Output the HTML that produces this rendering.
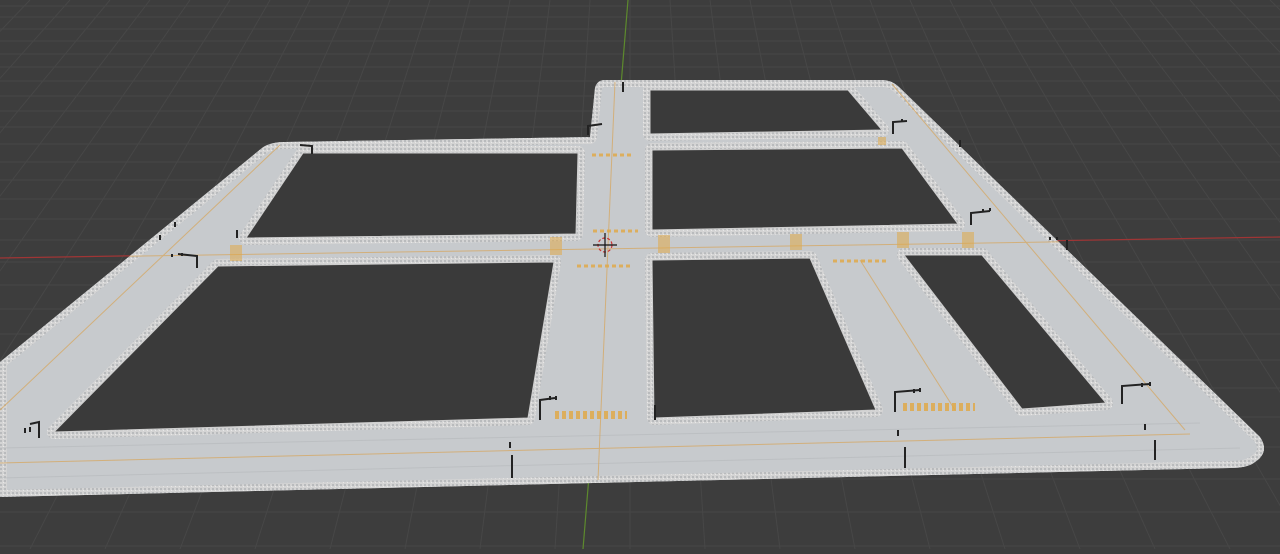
<!DOCTYPE html>
<html><head><style>html,body{margin:0;padding:0;background:#3d3d3d;overflow:hidden}</style></head>
<body>
<svg width="1280" height="549" viewBox="0 0 1280 549" xmlns="http://www.w3.org/2000/svg">
<defs>
<pattern id="gr" width="4" height="4" patternUnits="userSpaceOnUse">
<rect width="4" height="4" fill="#d4d4d4"/><rect x="0" y="0" width="2" height="2" fill="#b9bbbd"/><rect x="3" y="2" width="1" height="1" fill="#e8e8e8"/>
</pattern>
<path id="road" d="
M600,80 L882,80 Q892,80 900,88 L1260,437 Q1270,452 1255,462 Q1248,468 1230,468 L0,497 L0,362 L262,148 Q270,142 285,142 L590,137 L595,88 Q597,80 605,80 Z
M650,90 L848,90 L882,130 L650,134 Z
M652,150 L902,148 L958,224 L652,230 Z
M303,153 L578,153 L576,234 L246,238 Z
M218,266 L554,262 L528,418 L54,432 Z
M652,260 L810,258 L876,410 L654,418 Z
M904,255 L982,255 L1106,403 L1022,409 Z"/>
<clipPath id="rc"><use href="#road" clip-rule="evenodd"/></clipPath>
</defs>
<rect width="1280" height="549" fill="#3d3d3d"/>
<g stroke="#474747" stroke-width="1">
<line x1="0" y1="6" x2="1280" y2="6"/><line x1="0" y1="17" x2="1280" y2="17"/><line x1="0" y1="29" x2="1280" y2="29"/><line x1="0" y1="41" x2="1280" y2="41"/><line x1="0" y1="54" x2="1280" y2="54"/><line x1="0" y1="67" x2="1280" y2="67"/><line x1="0" y1="81" x2="1280" y2="81"/><line x1="0" y1="96" x2="1280" y2="96"/><line x1="0" y1="111" x2="1280" y2="111"/><line x1="0" y1="127" x2="1280" y2="127"/><line x1="0" y1="144" x2="1280" y2="144"/><line x1="0" y1="162" x2="1280" y2="162"/><line x1="0" y1="180" x2="1280" y2="180"/><line x1="0" y1="199" x2="1280" y2="199"/><line x1="0" y1="219" x2="1280" y2="219"/><line x1="0" y1="240" x2="1280" y2="240"/><line x1="0" y1="262" x2="1280" y2="262"/><line x1="0" y1="285" x2="1280" y2="285"/><line x1="0" y1="309" x2="1280" y2="309"/><line x1="0" y1="334" x2="1280" y2="334"/><line x1="0" y1="360" x2="1280" y2="360"/><line x1="0" y1="388" x2="1280" y2="388"/><line x1="0" y1="417" x2="1280" y2="417"/><line x1="0" y1="447" x2="1280" y2="447"/><line x1="0" y1="479" x2="1280" y2="479"/><line x1="0" y1="512" x2="1280" y2="512"/><line x1="0" y1="546" x2="1280" y2="546"/>
</g>
<g stroke="#474747" stroke-width="1">
<line x1="630" y1="0" x2="630" y2="549"/>
<line x1="670" y1="0" x2="705" y2="549"/><line x1="710" y1="0" x2="780" y2="549"/><line x1="750" y1="0" x2="855" y2="549"/><line x1="790" y1="0" x2="930" y2="549"/><line x1="830" y1="0" x2="1005" y2="549"/><line x1="870" y1="0" x2="1080" y2="549"/><line x1="910" y1="0" x2="1155" y2="549"/><line x1="950" y1="0" x2="1230" y2="549"/><line x1="990" y1="0" x2="1305" y2="549"/><line x1="1030" y1="0" x2="1380" y2="549"/><line x1="1070" y1="0" x2="1455" y2="549"/><line x1="1110" y1="0" x2="1530" y2="549"/><line x1="1150" y1="0" x2="1605" y2="549"/><line x1="1190" y1="0" x2="1680" y2="549"/><line x1="1230" y1="0" x2="1755" y2="549"/><line x1="1270" y1="0" x2="1830" y2="549"/>
<line x1="590" y1="0" x2="555" y2="549"/><line x1="550" y1="0" x2="480" y2="549"/><line x1="510" y1="0" x2="405" y2="549"/><line x1="470" y1="0" x2="330" y2="549"/><line x1="430" y1="0" x2="255" y2="549"/><line x1="390" y1="0" x2="180" y2="549"/><line x1="350" y1="0" x2="105" y2="549"/><line x1="310" y1="0" x2="30" y2="549"/><line x1="270" y1="0" x2="-45" y2="549"/><line x1="230" y1="0" x2="-120" y2="549"/><line x1="190" y1="0" x2="-195" y2="549"/><line x1="150" y1="0" x2="-270" y2="549"/><line x1="110" y1="0" x2="-345" y2="549"/><line x1="70" y1="0" x2="-420" y2="549"/><line x1="30" y1="0" x2="-495" y2="549"/>
</g>
<line x1="0" y1="258" x2="1280" y2="237" stroke="#a03535" stroke-width="1.2"/>
<line x1="628" y1="0" x2="583" y2="549" stroke="#5d8a2d" stroke-width="1.2"/>
<g clip-path="url(#rc)">
<rect width="1280" height="549" fill="#c7cacd"/>
<use href="#road" fill="none" stroke="url(#gr)" stroke-width="14" stroke-linejoin="round"/>
<g stroke="#b8bbbe" stroke-width="1" opacity="0.7">
<line x1="0" y1="478" x2="1240" y2="448"/><line x1="0" y1="448" x2="1200" y2="423"/>
</g>
<g stroke="#d7a458" stroke-width="1" fill="none" opacity="0.7">
<line x1="0" y1="463" x2="1190" y2="434"/>
<line x1="10" y1="258" x2="1180" y2="240"/>
<line x1="615" y1="82" x2="598" y2="480"/>
<line x1="280" y1="145" x2="0" y2="410"/>
<line x1="892" y1="84" x2="1185" y2="430"/>
<line x1="860" y1="260" x2="955" y2="410"/>
</g>
</g>
<g fill="#3a3a3a" stroke="#cfcfcf" stroke-width="1" stroke-linejoin="round">
<path d="M650,90 L848,90 L882,130 L650,134 Z"/>
<path d="M652,150 L902,148 L958,224 L652,230 Z"/>
<path d="M303,153 L578,153 L576,234 L246,238 Z"/>
<path d="M218,266 L554,262 L528,418 L54,432 Z"/>
<path d="M652,260 L810,258 L876,410 L654,418 Z"/>
<path d="M904,255 L982,255 L1106,403 L1022,409 Z"/>
</g>
<g stroke="#e0aa4a" stroke-width="8" stroke-dasharray="4 3" opacity="0.85">
<line x1="555" y1="415" x2="627" y2="415"/><line x1="903" y1="407" x2="975" y2="407"/>
</g>
<g stroke="#e0aa4a" stroke-width="3" stroke-dasharray="4 3" opacity="0.85">
<line x1="577" y1="266" x2="632" y2="266"/><line x1="593" y1="231" x2="638" y2="231"/><line x1="833" y1="261" x2="888" y2="261"/><line x1="592" y1="155" x2="632" y2="155"/>
</g>
<g fill="#e0aa4a" opacity="0.55">
<rect x="550" y="237" width="12" height="18"/><rect x="658" y="235" width="12" height="18"/><rect x="790" y="234" width="12" height="16"/><rect x="897" y="232" width="12" height="16"/><rect x="962" y="232" width="12" height="16"/><rect x="230" y="245" width="12" height="16"/><rect x="878" y="137" width="8" height="8"/>
</g>
<g stroke="#222" stroke-width="2" fill="none">
<path d="M39,438 V422 L30,424"/><path d="M25,433 v-5 M30,432 v-5"/>
<path d="M512,478 V455"/><path d="M510,448 v-6"/>
<path d="M540,420 V400 L555,398"/><path d="M550,400 v-4 M556,400 v-4"/>
<path d="M655,420 V405"/>
<path d="M895,412 V392 L920,390"/><path d="M914,393 v-4 M920,392 v-4"/>
<path d="M905,468 V447"/><path d="M898,436 v-6"/>
<path d="M1122,404 V386 L1150,384"/><path d="M1142,387 v-4 M1150,386 v-4"/>
<path d="M1155,460 V440"/><path d="M1145,430 v-6"/>
<path d="M971,225 V213 L990,211"/><path d="M983,212 v-3 M990,211 v-3"/>
<path d="M1067,250 V240"/><path d="M1050,240 v-3 M1057,240 v-3"/>
<path d="M893,134 V122 L907,121"/><path d="M902,122 v-3"/>
<path d="M960,147 V140"/>
<path d="M588,135 V126 L602,124"/>
<path d="M197,268 V256 L178,254"/><path d="M172,257 v-3 M182,256 v-3"/>
<path d="M160,240 v-5 M175,227 v-5"/>
<path d="M237,238 v-8"/><path d="M312,154 V146 L300,145"/>
<path d="M623,92 V82"/>
</g>
<g stroke="#111" stroke-width="1.2" fill="none">
<circle cx="605" cy="245" r="7" stroke="#c33" stroke-dasharray="3 2"/>
<line x1="605" y1="233" x2="605" y2="257"/><line x1="593" y1="245" x2="617" y2="245"/>
</g>
</svg>
</body></html>
